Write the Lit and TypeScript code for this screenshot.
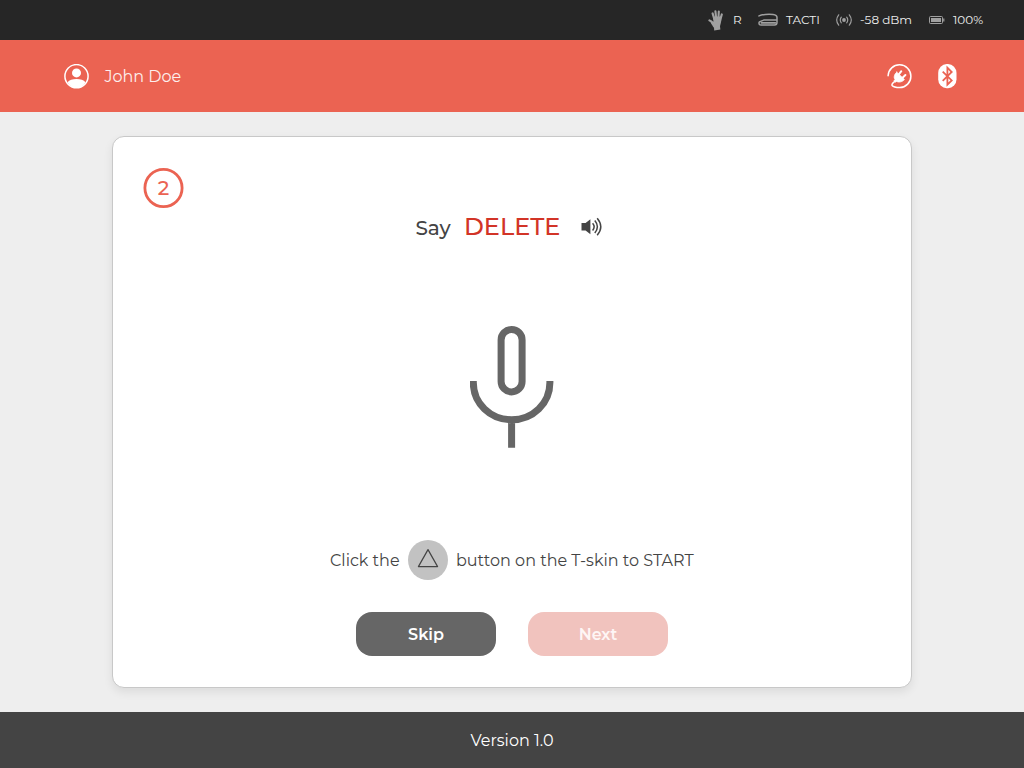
import { LitElement, html, css } from "lit";
import { customElement, property } from "lit/decorators.js";

@customElement("status-bar")
class StatusBar extends LitElement {
  static styles = css`
    :host { display: flex; height: 40px; background: #262626; color: #eee; align-items: center; justify-content: flex-end; gap: 16px; padding-right: 40px; box-sizing: border-box; font-size: 12px; line-height: 16px; }
    .item { display: flex; align-items: center; gap: 8px; white-space: nowrap; }
    svg { display: block; flex: none; }
    .r { width: 9px; }
    .tacti { width: 34px; }
    .dbm { width: 52px; }
    .pct { width: 31px; }
  `;
  render() {
    return html`
      <div class="item">
        <svg width="17" height="22" viewBox="0 0 17 22" fill="#a0a0a0" stroke="#a0a0a0" stroke-linecap="round" stroke-linejoin="round">
          <path stroke-width="2.1" d="M1.4 11.4 3.4 12.5 5.8 15M4.6 4.4 6.4 10.5M7.4 2.2 8.2 9.5M10.8 2.5 10.4 9.5M13.8 5.4 12.1 11.6" />
          <path stroke="none" d="M5 7.4 13 7.4 13.2 12C12.9 14.7 12.1 16.2 12 17.5L12.4 20.6 6.2 21.6 6 18.8C4.9 17.2 3.6 15.6 2.6 13.2L5.5 12.6Z" />
        </svg><span class="r">R</span>
      </div>
      <div class="item">
        <svg width="20" height="14" viewBox="0 0 20 14" fill="none" stroke="#a0a0a0" stroke-linejoin="round" stroke-linecap="round">
          <path stroke-width="1.5" d="M1 2.9C5 1.3 10 1 15 1.4 17.8 1.7 19 2.5 19 4.5V9.2C19 11.3 18.3 12 16.5 12H3.2C1.4 12 .9 11.2 1 9.8L1.4 8.9 5.7 7.1H18.5" />
          <path stroke-width="1.8" d="M3.4 9.8H17.3" />
        </svg><span class="tacti">TACTI</span>
      </div>
      <div class="item">
        <svg width="16" height="14" viewBox="0 0 16 14" fill="none" stroke="#a0a0a0" stroke-width="1.15" stroke-linecap="round">
          <circle cx="8" cy="7" r="1.9" fill="#a0a0a0" stroke="none" />
          <path d="M5.3 4.2Q3.2 7 5.3 9.8M10.7 4.2Q12.8 7 10.7 9.8M2.7 1.8Q-1.3 7 2.7 12.2M13.3 1.8Q17.3 7 13.3 12.2" />
        </svg><span class="dbm">-58 dBm</span>
      </div>
      <div class="item">
        <svg width="17" height="10" viewBox="0 0 17 10" fill="none" stroke="#a0a0a0">
          <rect x="1.5" y="1.5" width="13" height="7" rx="1" />
          <rect x="3" y="3" width="10" height="4" fill="#a0a0a0" stroke="none" />
          <path d="M15.8 3.5V6.5" stroke-width="1.2" />
        </svg><span class="pct">100%</span>
      </div>
    `;
  }
}

@customElement("user-header")
class UserHeader extends LitElement {
  @property() name = "";
  static styles = css`
    :host { display: flex; height: 72px; background: #eb6352; color: #fff; align-items: center; justify-content: space-between; padding: 0 67px 0 64px; box-sizing: border-box; font-size: 16px; }
    .side { display: flex; align-items: center; }
    .user { gap: 15.5px; }
    .links { gap: 26px; }
    .name { line-height: 20px; padding-top: 1px; opacity: .9; }
    svg { display: block; }
  `;
  render() {
    return html`
      <div class="side user">
        <svg width="25" height="25" viewBox="0 0 25 25">
          <circle cx="12.5" cy="12.2" r="11.6" fill="none" stroke="#fff" stroke-width="1.5" />
          <circle cx="12.5" cy="8.9" r="4.5" fill="#fff" />
          <path fill="#fff" d="M3.5 18.2C5.2 16 8.6 15 12.5 15S19.8 16 21.5 18.2C19.6 21.7 16.3 23.9 12.5 23.9S5.4 21.7 3.5 18.2Z" />
        </svg>
        <span class="name">${this.name}</span>
      </div>
      <div class="side links">
        <svg width="25" height="25" viewBox="0 0 25 25" fill="none" stroke="#fff" stroke-linecap="round">
          <path stroke-width="1.5" d="M1.1 11.7A11.4 11.4 0 1 1 12.8 23.6C9.5 23.6 6.4 23.2 5.1 21.5 4.4 20.1 5.4 19 7.7 17.3" />
          <path fill="#fff" stroke-width=".8" d="M9.8 8.2 17.4 15.5C15.8 17.7 12.1 18.8 9.7 17.4L8.2 18.2 6.9 17 8 15.5C6.4 13.3 7.4 9.9 9.8 8.2Z" />
          <path stroke-width="2" d="M12 10.2 14.3 7.2M15.6 13.7 18.4 11" />
        </svg>
        <svg width="19" height="25" viewBox="0 0 19 25">
          <rect x=".2" y="0" width="18.3" height="24.2" rx="8.5" ry="9" fill="#fff" />
          <path fill="none" stroke="#eb6352" stroke-width="1.8" d="M4.7 7.7 13.7 16.4 9.4 20.7V3.7L13.7 8 4.7 16.8" />
        </svg>
      </div>
    `;
  }
}

@customElement("task-card")
class TaskCard extends LitElement {
  @property({ type: Number }) step = 2;
  @property() word = "DELETE";
  static styles = css`
    :host { display: flex; flex-direction: column; align-items: center; width: 800px; height: 552px; box-sizing: border-box; background: #fff; border: 1px solid #c8c8c8; border-radius: 12px; box-shadow: 0 4px 10px rgba(0,0,0,.08); color: #444; }
    svg { display: block; flex: none; }
    .step { position: relative; align-self: flex-start; width: 41px; height: 40px; margin: 31px 0 0 30px; display: grid; place-items: center; color: #eb6352; font-size: 20px; font-weight: 500; line-height: 24px; }
    .step svg, .step span { grid-area: 1 / 1; }
    .prompt { display: flex; height: 34px; align-items: center; margin-top: 2px; align-self: stretch; padding-left: 302.4px; white-space: nowrap; font-weight: 500; }
    .say { font-size: 20px; line-height: 24px; width: 48.6px; padding-top: 2px; }
    .word { font-size: 24px; line-height: 30px; width: 117px; color: #d23427; }
    .mic { margin-top: 81px; }
    .hint { display: flex; align-items: center; align-self: stretch; margin-top: 92px; height: 40px; padding-left: 217px; font-size: 16px; line-height: 20px; white-space: nowrap; }
    .before { width: 78px; padding-top: 1px; }
    .after { padding: 1px 0 0 8px; }
    .buttons { display: flex; gap: 32px; margin-top: 32px; }
    button { width: 140px; height: 44px; padding: 0; border: 0; border-radius: 16px; background: #666; color: #fff; font: inherit; font-size: 16px; font-weight: 600; }
    .next { background: #f1c3be; color: #fef6f5; }
  `;
  render() {
    return html`
      <div class="step">
        <svg width="41" height="40" viewBox="0 0 41 40"><circle cx="20.5" cy="20" r="18.6" fill="none" stroke="#eb6352" stroke-width="2.8" /></svg>
        <span>${this.step}</span>
      </div>
      <div class="prompt">
        <span class="say">Say</span><span class="word">${this.word}</span>
        <svg width="22" height="20" viewBox="0 0 22 20">
          <path fill="#444" d="M.5 6.1H4.6L9.4 2.3V17.3L4.6 13.6H.5Z" />
          <path fill="none" stroke="#444" stroke-width="1.5" d="M11.6 6.2Q14.7 9.8 11.6 13.4M13.8 3.6Q19 9.8 13.8 16M16.2 1.3Q23.4 9.8 16.2 18.2" />
        </svg>
      </div>
      <svg class="mic" width="84" height="123" viewBox="0.2 -0.4 84 123" fill="none" stroke="#666" stroke-width="7">
        <rect x="31.3" y="4.1" width="21" height="62.4" rx="10.5" />
        <path d="M3.5 55.6V57C3.5 78 20.5 94.3 41.8 94.3S80.1 78 80.1 57V55.6M41.8 94V122.3" />
      </svg>
      <div class="hint">
        <span class="before">Click the</span>
        <svg width="40" height="40" viewBox="0 0 40 40">
          <circle cx="20" cy="20" r="20" fill="#c2c2c2" />
          <path d="M20 9.6 29.6 26.6H10.4Z" fill="none" stroke="#444" stroke-width="1.2" stroke-linejoin="round" />
        </svg>
        <span class="after">button on the T-skin to START</span>
      </div>
      <div class="buttons"><button>Skip</button><button class="next" disabled>Next</button></div>
    `;
  }
}

@customElement("app-root")
class AppRoot extends LitElement {
  static styles = css`
    :host { display: flex; flex-direction: column; width: 1024px; height: 768px; overflow: hidden; background: #eee; font-family: Montserrat, Inter, sans-serif; }
    main { flex: 1; display: flex; justify-content: center; align-items: center; }
    footer { height: 56px; background: #444; color: #fff; display: flex; align-items: center; justify-content: center; font-size: 16px; padding-top: 1px; box-sizing: border-box; }
  `;
  render() {
    return html`
      <status-bar></status-bar>
      <user-header name="John Doe"></user-header>
      <main><task-card></task-card></main>
      <footer>Version 1.0</footer>
    `;
  }
}
